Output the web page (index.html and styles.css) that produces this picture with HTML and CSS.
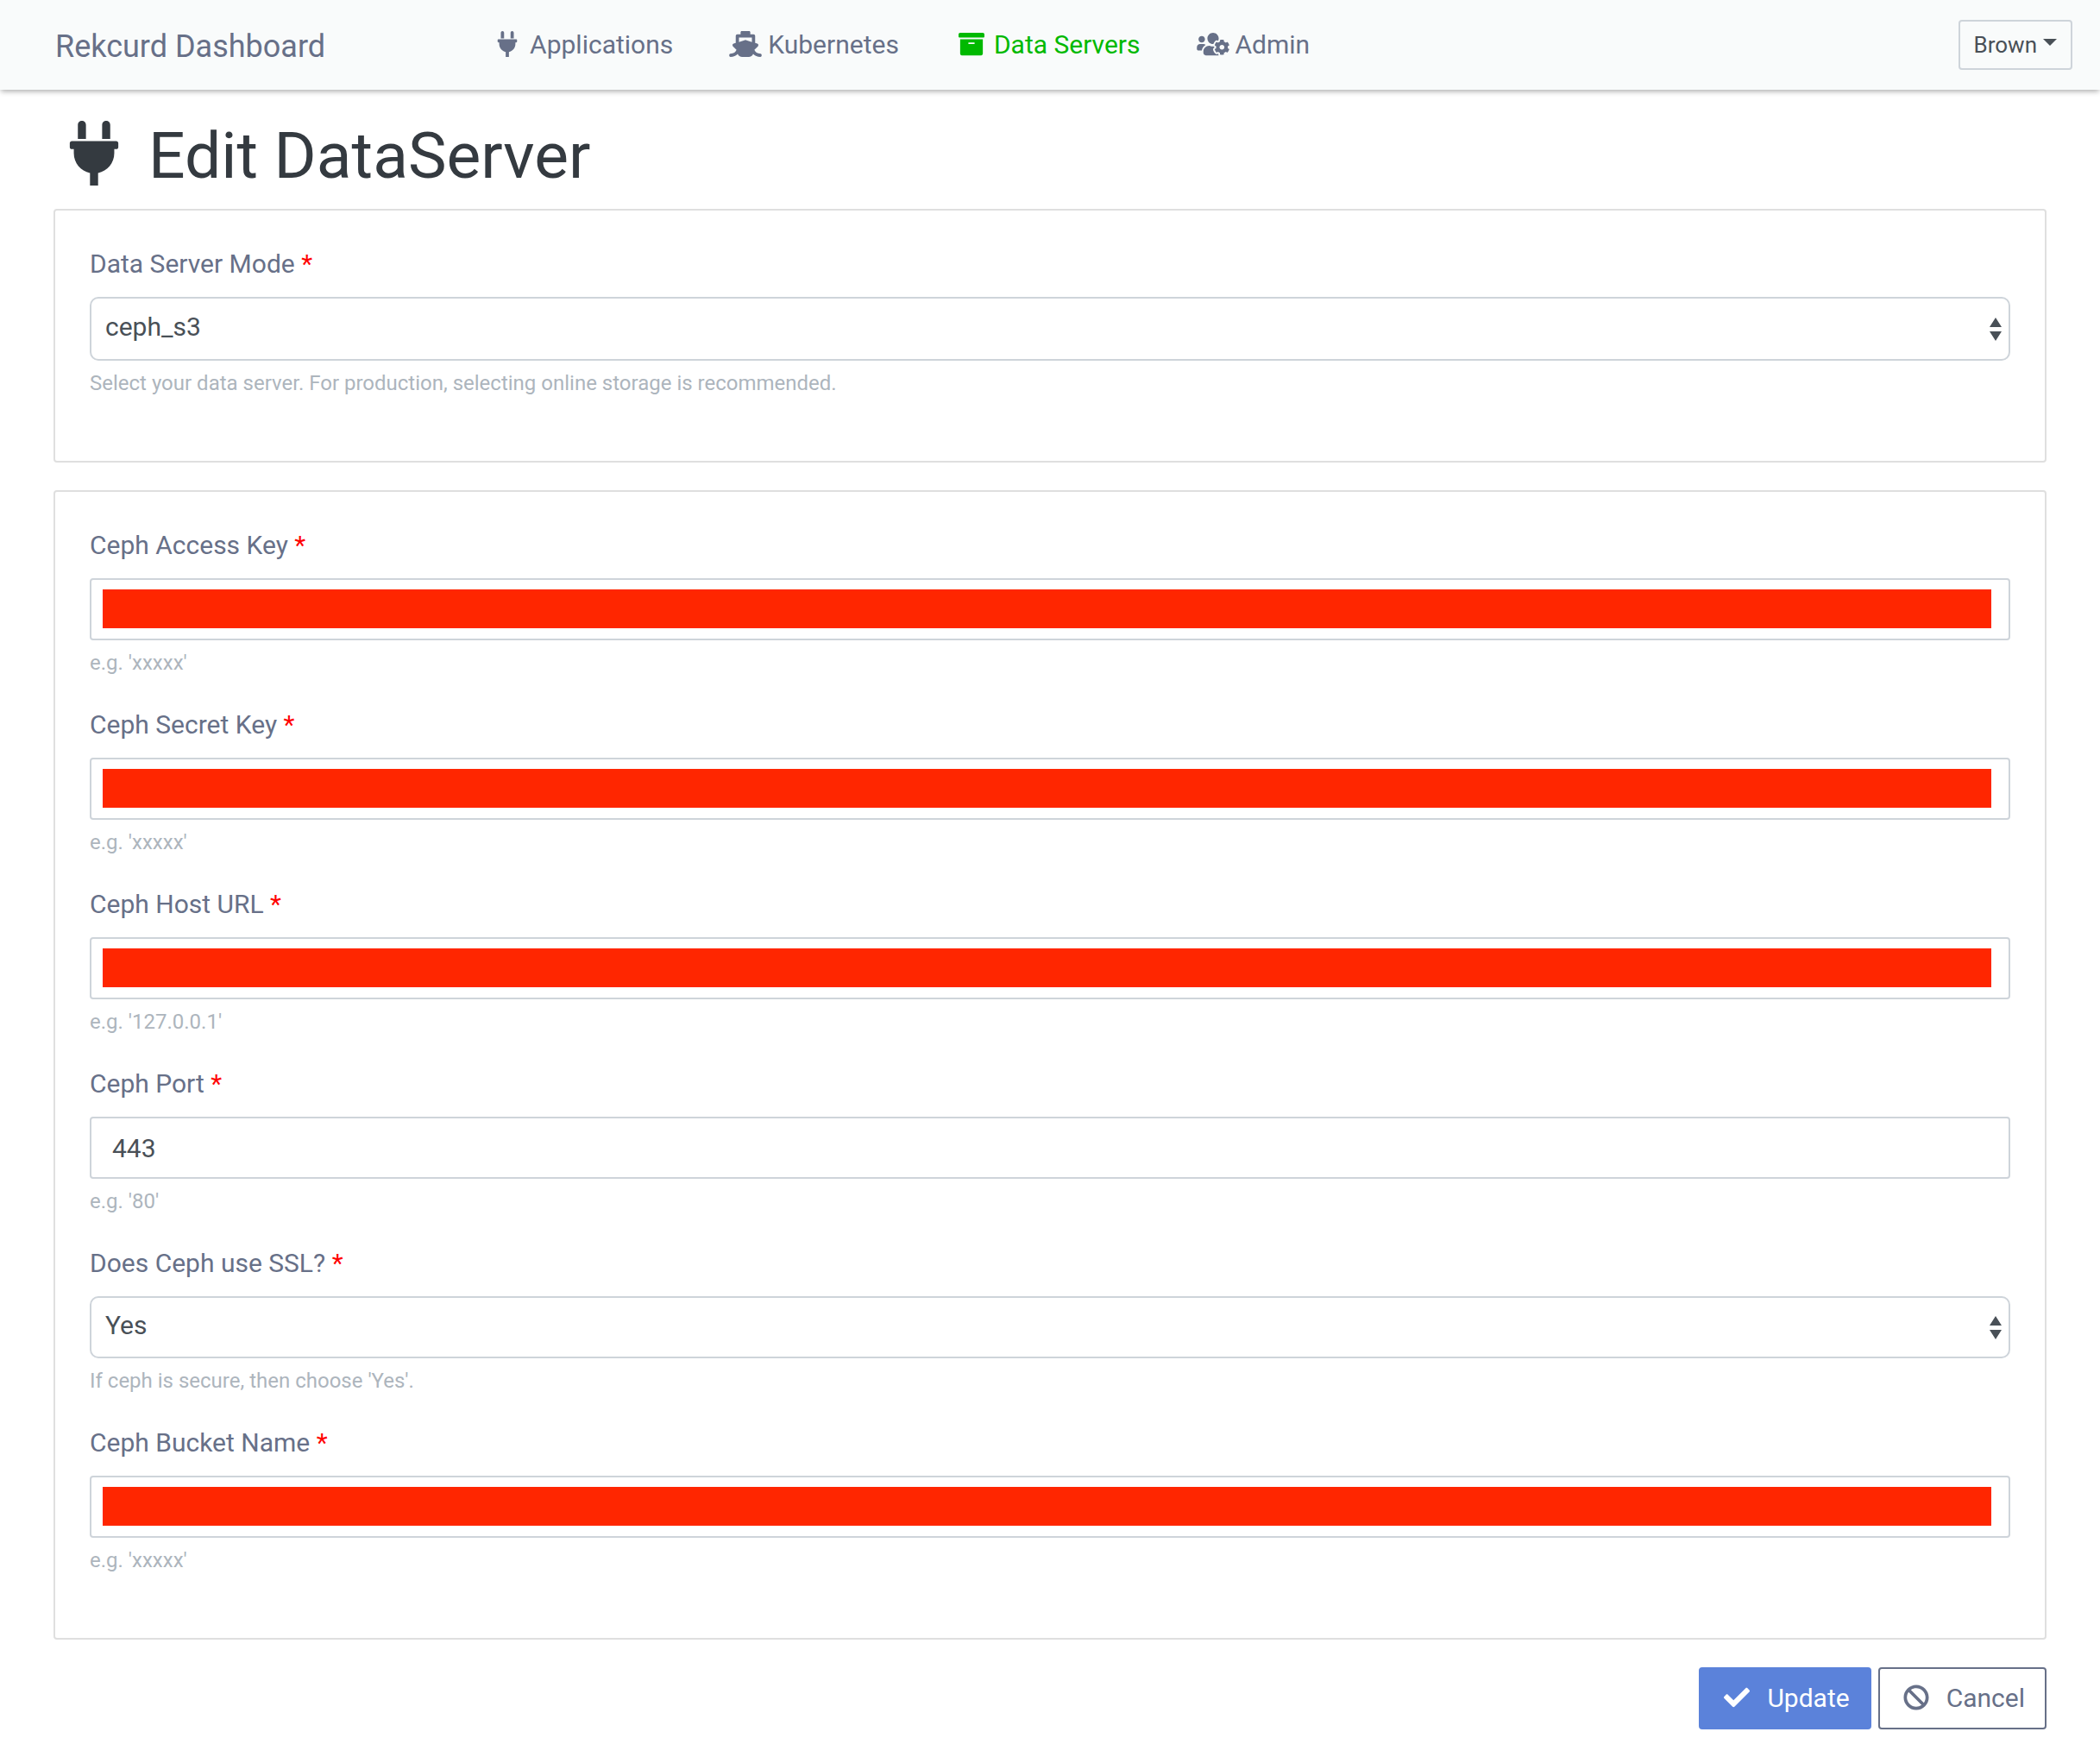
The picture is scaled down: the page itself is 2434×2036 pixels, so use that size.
FILE: index.html
```html
<!DOCTYPE html>
<html lang="en">
<head>
<meta charset="utf-8">
<title>Rekcurd Dashboard</title>
<meta name="viewport" content="width=device-width, initial-scale=1">
<link rel="stylesheet" href="styles.css">
</head>
<body>
<svg class="sprite" aria-hidden="true">
  <symbol id="plug" viewBox="0 0 384 512"><path d="M256 144V32c0-17.673 14.327-32 32-32s32 14.327 32 32v112h-64zm112 16H16c-8.837 0-16 7.163-16 16v32c0 8.837 7.163 16 16 16h16v32c0 77.406 54.969 141.971 128 156.796V512h64v-99.204c73.031-14.825 128-79.39 128-156.796v-32h16c8.837 0 16-7.163 16-16v-32c0-8.837-7.163-16-16-16zm-240-16V32c0-17.673-14.327-32-32-32S64 14.327 64 32v112h64z"/></symbol>
  <symbol id="ship" viewBox="0 0 640 512"><path d="M496.616 372.639l70.012-70.012c16.899-16.9 9.942-45.771-12.836-53.092L512 236.102V96c0-17.673-14.327-32-32-32h-64V24c0-13.255-10.745-24-24-24H248c-13.255 0-24 10.745-24 24v40h-64c-17.673 0-32 14.327-32 32v140.102l-41.792 13.433c-22.753 7.313-29.754 36.173-12.836 53.092l70.012 70.012C125.828 416.287 85.587 448 24 448c-13.255 0-24 10.745-24 24v16c0 13.255 10.745 24 24 24 61.023 0 107.499-20.61 143.258-59.396C181.677 487.432 216.021 512 256 512h128c39.979 0 74.323-24.568 88.742-59.396C508.495 491.384 554.968 512 616 512c13.255 0 24-10.745 24-24v-16c0-13.255-10.745-24-24-24-60.817 0-101.542-31.001-119.384-75.361zM192 128h256v87.531l-118.208-37.995a31.995 31.995 0 0 0-19.584 0L192 215.531V128z"/></symbol>
  <symbol id="archive" viewBox="0 0 512 512"><path d="M32 448c0 17.7 14.3 32 32 32h384c17.7 0 32-14.3 32-32V160H32v288zm160-212c0-6.6 5.4-12 12-12h104c6.6 0 12 5.4 12 12v8c0 6.6-5.4 12-12 12H204c-6.6 0-12-5.4-12-12v-8zM480 32H32C14.3 32 0 46.3 0 64v48c0 8.8 7.2 16 16 16h480c8.8 0 16-7.2 16-16V64c0-17.7-14.3-32-32-32z"/></symbol>
  <symbol id="users-cog" viewBox="0 0 640 512"><path d="M610.5 341.3c2.6-14.1 2.6-28.5 0-42.6l25.8-14.9c3-1.7 4.3-5.2 3.3-8.5-6.7-21.6-18.2-41.2-33.2-57.4-2.3-2.5-6-3.1-9-1.4l-25.8 14.9c-10.9-9.3-23.4-16.5-36.9-21.3v-29.8c0-3.4-2.4-6.4-5.7-7.1-22.3-5-45-4.8-66.2 0-3.3.7-5.7 3.7-5.7 7.1v29.8c-13.5 4.8-26 12-36.9 21.3l-25.8-14.9c-2.9-1.7-6.7-1.1-9 1.4-15 16.2-26.5 35.8-33.2 57.4-1 3.3.4 6.8 3.3 8.5l25.8 14.9c-2.6 14.1-2.6 28.5 0 42.6l-25.8 14.9c-3 1.7-4.3 5.2-3.3 8.5 6.7 21.6 18.2 41.1 33.2 57.4 2.3 2.5 6 3.1 9 1.4l25.8-14.9c10.9 9.3 23.4 16.5 36.9 21.3v29.8c0 3.4 2.4 6.4 5.7 7.1 22.3 5 45 4.8 66.2 0 3.3-.7 5.7-3.7 5.7-7.1v-29.8c13.5-4.8 26-12 36.9-21.3l25.8 14.9c2.9 1.7 6.7 1.1 9-1.4 15-16.2 26.5-35.8 33.2-57.4 1-3.3-.4-6.8-3.3-8.5l-25.8-14.9zM496 368.5c-26.8 0-48.5-21.8-48.5-48.5s21.8-48.5 48.5-48.5 48.5 21.8 48.5 48.5-21.7 48.5-48.5 48.5zM96 224c35.3 0 64-28.7 64-64s-28.7-64-64-64-64 28.7-64 64 28.7 64 64 64zm224 32c1.9 0 3.7-.5 5.6-.6 8.3-21.7 20.5-42.1 36.3-59.2 7.4-8 17.9-12.6 28.9-12.6 6.9 0 13.7 1.8 19.6 5.3l7.9 4.6c.8-.5 1.6-.9 2.4-1.4 7-14.6 11.2-30.8 11.2-48 0-61.9-50.1-112-112-112S208 82.1 208 144c0 61.9 50.1 112 112 112zm105.2 194.5c-2.3-1.2-4.6-2.6-6.8-3.9-8.2 4.8-15.3 9.8-27.5 9.8-10.9 0-21.4-4.6-28.9-12.6-18.3-19.8-32.3-43.9-40.2-69.6-10.7-34.5 24.9-49.7 25.8-50.3-.1-2.6-.1-5.2 0-7.8l-7.9-4.6c-3.8-2.2-7-5-9.8-8.1-3.3.2-6.5.6-9.8.6-24.6 0-47.6-6-68.5-16h-8.3C179.6 288 128 339.6 128 403.2V432c0 26.5 21.5 48 48 48h255.4c-3.7-6-6.2-12.8-6.2-20.3v-9.2zM173.1 274.6C161.5 263.1 145.6 256 128 256H64c-35.3 0-64 28.7-64 64v32c0 17.7 14.3 32 32 32h65.9c6.3-47.4 34.9-87.3 75.2-109.4z"/></symbol>
  <symbol id="check" viewBox="0 0 512 512"><path d="M173.898 439.404l-166.4-166.4c-9.997-9.997-9.997-26.206 0-36.204l36.203-36.204c9.997-9.998 26.207-9.998 36.204 0L192 312.69 432.095 72.596c9.997-9.997 26.207-9.997 36.204 0l36.203 36.204c9.997 9.997 9.997 26.206 0 36.204l-294.4 294.401c-9.998 9.997-26.207 9.997-36.204-.001z"/></symbol>
  <symbol id="ban" viewBox="0 0 512 512"><path d="M256 8C119.034 8 8 119.033 8 256s111.034 248 248 248 248-111.034 248-248S392.967 8 256 8zm130.108 117.892c65.448 65.448 70 165.481 20.677 235.637L150.47 105.216c70.204-49.356 170.226-44.735 235.638 20.676zM125.892 386.108c-65.448-65.448-70-165.481-20.677-235.637L361.53 406.784c-70.203 49.356-170.226 44.736-235.638-20.676z"/></symbol>
</svg>

<header class="navbar">
  <a class="brand" href="#">Rekcurd Dashboard</a>
  <nav class="nav">
    <a class="nav-link" href="#"><svg class="icon"><use href="#plug"/></svg>Applications</a>
    <a class="nav-link" href="#"><svg class="icon"><use href="#ship"/></svg>Kubernetes</a>
    <a class="nav-link active" href="#" aria-current="page"><svg class="icon"><use href="#archive"/></svg>Data Servers</a>
    <a class="nav-link" href="#"><svg class="icon"><use href="#users-cog"/></svg>Admin</a>
  </nav>
  <button class="user-menu" type="button" aria-haspopup="true">Brown</button>
</header>

<main class="page">
  <h1 class="title"><svg class="title-icon" aria-hidden="true"><use href="#plug"/></svg>Edit DataServer</h1>
  <form class="form">
    <section class="card">
      <div class="field">
        <label class="label" for="mode">Data Server Mode <span class="required">*</span></label>
        <select class="control select select-main" id="mode"><option>ceph_s3</option></select>
        <small class="help">Select your data server. For production, selecting online storage is recommended.</small>
      </div>
    </section>

    <section class="card">
      <div class="field">
        <label class="label" for="access-key">Ceph Access Key <span class="required">*</span></label>
        <input class="control masked" id="access-key" type="text">
        <small class="help">e.g. 'xxxxx'</small>
      </div>
      <div class="field">
        <label class="label" for="secret-key">Ceph Secret Key <span class="required">*</span></label>
        <input class="control masked" id="secret-key" type="text">
        <small class="help">e.g. 'xxxxx'</small>
      </div>
      <div class="field">
        <label class="label" for="host">Ceph Host URL <span class="required">*</span></label>
        <input class="control masked" id="host" type="text">
        <small class="help">e.g. '127.0.0.1'</small>
      </div>
      <div class="field">
        <label class="label" for="port">Ceph Port <span class="required">*</span></label>
        <input class="control" id="port" type="text" value="443">
        <small class="help">e.g. '80'</small>
      </div>
      <div class="field">
        <label class="label" for="ssl">Does Ceph use SSL? <span class="required">*</span></label>
        <select class="control select" id="ssl"><option>Yes</option><option>No</option></select>
        <small class="help">If ceph is secure, then choose 'Yes'.</small>
      </div>
      <div class="field">
        <label class="label" for="bucket">Ceph Bucket Name <span class="required">*</span></label>
        <input class="control masked" id="bucket" type="text">
        <small class="help">e.g. 'xxxxx'</small>
      </div>
    </section>

    <div class="actions">
      <button class="btn btn-primary" type="submit"><svg class="icon"><use href="#check"/></svg>Update</button>
      <button class="btn btn-outline" type="button"><svg class="icon"><use href="#ban"/></svg>Cancel</button>
    </div>
  </form>
</main>
</body>
</html>
```
FILE: styles.css
```css
* {
  box-sizing: border-box;
}

body {
  margin: 0;
  background: #fff;
  color: #495057;
  font-family: Roboto, "Liberation Sans", sans-serif;
  font-size: 30px;
  line-height: 44px;
}

button,
input,
select {
  font: inherit;
}

.sprite {
  display: none;
}

.icon {
  width: 38px;
  height: 30px;
  fill: currentColor;
  vertical-align: -4px;
}

/* Top bar */
.navbar {
  display: flex;
  align-items: center;
  height: 104px;
  padding: 0 32px 0 64px;
  background: #f9fbfb;
  box-shadow: 0 3px 6px -1px rgba(0, 0, 0, 0.32);
}

.brand {
  margin-right: 192px;
  padding-top: 4px;
  color: #677088;
  font-size: 36px;
  text-decoration: none;
}

.nav {
  display: flex;
  gap: 65px;
}

.nav-link {
  color: #677088;
  text-decoration: none;
  white-space: nowrap;
}

.nav-link .icon {
  margin-right: 7px;
}

.nav-link.active {
  color: #00b900;
}

.user-menu {
  display: flex;
  align-items: center;
  gap: 7px;
  height: 58px;
  margin-left: auto;
  padding: 0 16px;
  border: 2px solid #ced4da;
  border-radius: 4px;
  background: transparent;
  color: #495057;
  font-size: 26px;
}

.user-menu::after {
  content: "";
  margin-bottom: 6px;
  border: 8px solid transparent;
  border-top-color: currentColor;
  border-bottom: 0;
}

/* Page */
.page {
  padding: 30px 62px 32px;
}

.title {
  margin: 0 0 16px;
  color: #343a40;
  font-size: 75px;
  font-weight: 400;
  line-height: 92px;
}

.title-icon {
  width: 94px;
  height: 75px;
  margin-right: 16px;
  fill: currentColor;
  vertical-align: -9px;
}

.form {
  display: flex;
  flex-direction: column;
  gap: 32px;
}

.card {
  padding: 40px;
  border: 2px solid #dfdfdf;
  border-radius: 4px;
}

.field {
  display: flex;
  flex-direction: column;
  margin-bottom: 32px;
}

.label {
  margin-bottom: 16px;
  color: #677088;
}

.required {
  color: #f00;
}

.control {
  width: 100%;
  height: 72px;
  padding: 0 24px;
  border: 2px solid #ced4da;
  border-radius: 4px;
  background: #fff;
  color: #495057;
}

.masked {
  padding: 11px 20px 12px 13px;
  background: #fff linear-gradient(#ff2600, #ff2600) no-repeat content-box;
}

.select {
  padding: 0 32px 4px 16px;
  border-radius: 10px;
  appearance: none;
  background: #fff url("data:image/svg+xml,%3Csvg xmlns='http://www.w3.org/2000/svg' viewBox='0 0 14 27'%3E%3Cpath fill='%23495057' d='M7 0L0 11h14zM7 27L0 16h14z'/%3E%3C/svg%3E") no-repeat right 8px center / 14px 27px;
}

.select-main {
  height: 74px;
}

.help {
  margin-top: 8px;
  color: #adb5bd;
  font-size: 24px;
  line-height: 36px;
}

.actions {
  display: flex;
  justify-content: flex-end;
  gap: 8px;
}

.btn {
  height: 72px;
  padding: 0 23px;
  border: 2px solid;
  border-radius: 4px;
}

.btn .icon {
  margin-right: 16px;
}

.btn-primary {
  border-color: #5b82da;
  background: #5b82da;
  color: #fff;
}

.btn-outline {
  border-color: #677088;
  background: #fff;
  color: #677088;
}
```
